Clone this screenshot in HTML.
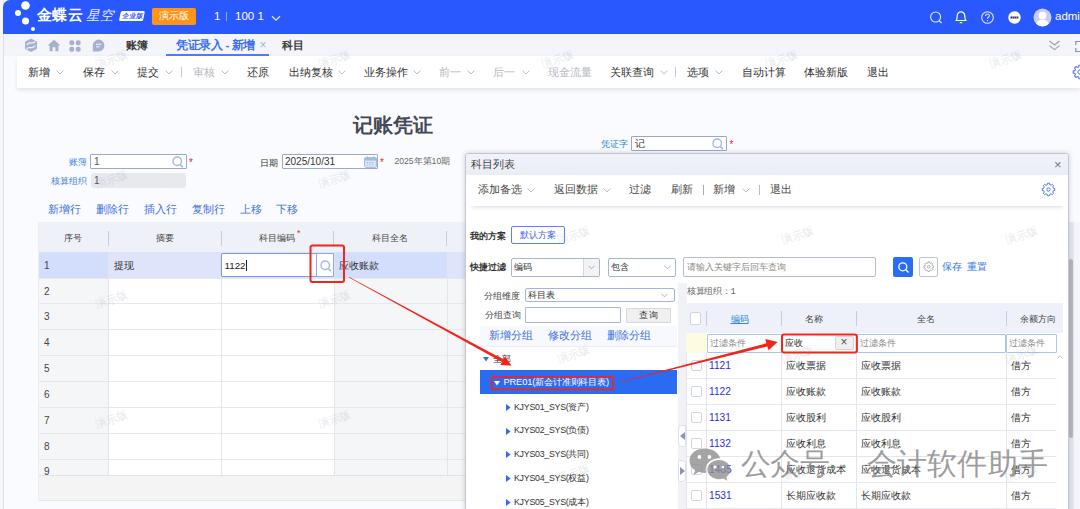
<!DOCTYPE html>
<html><head><meta charset="utf-8">
<style>
*{box-sizing:border-box;margin:0;padding:0}
html,body{width:1080px;height:509px;overflow:hidden;background:#f7f7f8}
body{font-family:"Liberation Sans",sans-serif;position:relative;color:#333;font-size:11px}
.abs{position:absolute}
.t{position:absolute;white-space:nowrap;line-height:1}
#app{position:absolute;left:2.5px;top:0;width:1077.5px;height:509px;background:#fafbfe;border-left:1px solid #dfe0e5}
#hdr{position:absolute;left:3px;top:0;width:1077px;height:34px;background:#2a58ff;border-top-left-radius:7px}
#tabs{position:absolute;left:4px;top:34px;width:1076px;height:22px;background:#f3f5fa}
#tb{position:absolute;left:17px;top:56px;width:1063px;height:32px;background:#fff;box-shadow:0 2px 4px rgba(120,130,160,.18)}
.mi{position:absolute;top:66.2px;font-size:10.6px;line-height:12px;color:#333;white-space:nowrap}
.mi.g{color:#b4b8c0}
.chev{position:absolute;width:8px;height:5px}
.wm{position:absolute;font-size:11px;color:rgba(150,155,170,.27);transform:rotate(-20deg);white-space:nowrap;line-height:1;z-index:50;pointer-events:none}
</style></head><body>
<div id="app"></div>
<div id="hdr"></div>
<div id="tabs"></div>
<div id="tb"></div>

<!-- header logo dots -->
<svg class="abs" style="left:10px;top:0;width:30px;height:34px" viewBox="0 0 30 34"><circle cx="15.5" cy="5.5" r="4.3" fill="#fff"/><circle cx="8" cy="13" r="3" fill="#fff"/><circle cx="15.5" cy="21" r="3.5" fill="#fff"/><circle cx="23" cy="29" r="2" fill="#fff"/></svg>
<div class="t" style="left:37px;top:8px;font-size:14.5px;font-weight:bold;color:#fff;letter-spacing:.4px">金蝶云</div>
<div class="t" style="left:86px;top:9px;font-size:13.5px;font-style:italic;color:#e8ecff">星空</div>
<div class="abs" style="left:120px;top:11px;width:24px;height:9.5px;background:#fff;border-radius:1.5px;transform:skewX(-12deg)"></div>
<div class="t" style="left:122px;top:12.5px;font-size:6.5px;font-style:italic;font-weight:bold;color:#2a58ff">企业版</div>
<div class="abs" style="left:152px;top:7.5px;width:44px;height:17px;background:#ff9419;border-radius:2px"></div>
<div class="t" style="left:159px;top:11px;font-size:10px;color:#fff">演示版</div>
<div class="t" style="left:214px;top:11px;font-size:11.5px;color:#fff">1</div>
<div class="abs" style="left:226px;top:12px;width:1px;height:9px;background:#8fa6ff"></div>
<div class="t" style="left:235px;top:11px;font-size:11.5px;color:#fff">100 1</div>
<svg class="abs" style="left:271px;top:15px;width:10px;height:7px" viewBox="0 0 10 7"><path d="M1 1.2 L5 5.2 L9 1.2" fill="none" stroke="#dfe6ff" stroke-width="1.3"/></svg>
<!-- header right icons -->
<svg class="abs" style="left:928px;top:9px;width:16px;height:16px" viewBox="0 0 16 16"><circle cx="7.6" cy="8" r="5" fill="none" stroke="#e3e9ff" stroke-width="1.1"/><path d="M11.2 11.7 L13.6 14" stroke="#e3e9ff" stroke-width="1.2" fill="none"/></svg>
<svg class="abs" style="left:953px;top:9px;width:16px;height:16px" viewBox="0 0 16 16"><path d="M3 11.5 H13 C11.8 10.5 11.8 9.5 11.8 7 C11.8 4.5 10 2.8 8 2.8 C6 2.8 4.2 4.5 4.2 7 C4.2 9.5 4.2 10.5 3 11.5 Z" fill="none" stroke="#fff" stroke-width="1.2" stroke-linejoin="round"/><path d="M6.8 13.6 H9.2" stroke="#fff" stroke-width="1.3"/></svg>
<svg class="abs" style="left:979px;top:9px;width:17px;height:17px" viewBox="0 0 17 17"><circle cx="8.5" cy="8.5" r="5.8" fill="none" stroke="#e3e9ff" stroke-width="1.1"/><path d="M6.6 7 C6.6 5.6 7.5 5 8.5 5 C9.6 5 10.4 5.7 10.4 6.7 C10.4 8 8.5 8.1 8.5 9.7" fill="none" stroke="#e3e9ff" stroke-width="1.05"/><circle cx="8.5" cy="11.6" r=".7" fill="#e3e9ff"/></svg>
<svg class="abs" style="left:1006px;top:9px;width:17px;height:17px" viewBox="0 0 17 17"><circle cx="8.5" cy="8.5" r="6.2" fill="#fff"/><path d="M4.5 8.5 H12.5" stroke="#2b3350" stroke-width="1.8" stroke-dasharray="1.7 .35"/></svg>
<svg class="abs" style="left:1033px;top:8px;width:19px;height:19px" viewBox="0 0 19 19"><defs><clipPath id="av"><circle cx="9.5" cy="9.5" r="9"/></clipPath></defs><circle cx="9.5" cy="9.5" r="9" fill="#c9cdf3"/><g clip-path="url(#av)"><circle cx="9.5" cy="7.6" r="3.9" fill="#fff"/><ellipse cx="9.5" cy="17.5" rx="6.6" ry="6" fill="#fff"/></g></svg>
<div class="t" style="left:1055px;top:10.5px;font-size:11.5px;color:#fff">admin</div>


<!-- tab icons -->
<svg class="abs" style="left:24px;top:38px;width:14px;height:14.5px" viewBox="0 0 14 14.5"><path d="M7 .5 L13 3.8 V10.7 L7 14 L1 10.7 V3.8 Z" fill="#a6b0cf"/><path d="M2.6 6.6 L5.6 4.9 H9.2 L11.4 3.8 M2.6 10.6 L4.8 9.5 H8.4 L11.4 7.8" stroke="#f3f5fa" stroke-width="1.25" fill="none"/></svg>
<svg class="abs" style="left:47px;top:39px;width:14px;height:13px" viewBox="0 0 14 13"><path d="M7 .8 L13.4 6.4 H11.4 V12.2 H8.4 V8.2 H5.6 V12.2 H2.6 V6.4 H.6 Z" fill="#a6b0cf"/></svg>
<svg class="abs" style="left:69px;top:39.5px;width:12px;height:12px" viewBox="0 0 12 12"><rect x=".3" y=".3" width="5" height="5" rx="2.2" fill="#a6b0cf"/><rect x="6.7" y=".3" width="5" height="5" rx="2.2" fill="#a6b0cf"/><rect x=".3" y="6.7" width="5" height="5" rx="2.2" fill="#a6b0cf"/><rect x="6.7" y="6.7" width="5" height="5" rx="2.2" fill="#a6b0cf"/></svg>
<svg class="abs" style="left:91.5px;top:39px;width:13px;height:13px" viewBox="0 0 13 13"><path d="M6.5 .6 A5.9 5.9 0 1 1 6.5 12.4 H.8 V6.5 A5.9 5.9 0 0 1 6.5 .6 Z" fill="#a6b0cf"/><path d="M4 5.2 H9.4 M4 7.8 H7.6" stroke="#f3f5fa" stroke-width="1.1"/></svg>
<div class="t" style="left:126px;top:40px;font-size:11.2px;font-weight:bold;color:#3a3a3a">账簿</div>
<div class="t" style="left:176px;top:39.5px;font-size:11.5px;font-weight:bold;color:#3a6df0;letter-spacing:-.35px">凭证录入 - 新增</div>
<div class="t" style="left:259.5px;top:39px;font-size:12px;color:#b0b4bd">×</div>
<div class="abs" style="left:165.5px;top:54px;width:103.5px;height:1.5px;background:#4b7bf5"></div>
<div class="t" style="left:282px;top:40px;font-size:11.2px;font-weight:bold;color:#3a3a3a">科目</div>
<svg class="abs" style="left:1048px;top:39px;width:13px;height:13px" viewBox="0 0 13 13"><path d="M1.5 2 L6.5 6 L11.5 2 M1.5 6.6 L6.5 10.6 L11.5 6.6" fill="none" stroke="#9a9fb0" stroke-width="1.15"/></svg>
<svg class="abs" style="left:1074px;top:40px;width:8px;height:13px" viewBox="0 0 8 13"><path d="M6 1.5 H1.8 V5 M1.8 8 V11.5 H6" fill="none" stroke="#8a90a3" stroke-width="1.2"/></svg>

<div class="mi" style="left:27.5px">新增</div><svg class="chev" style="left:56px;top:70px" viewBox="0 0 8 5"><path d="M.6 .6 L4 4 L7.4 .6" fill="none" stroke="#b9bdc8" stroke-width="1"/></svg><div class="mi" style="left:82.5px">保存</div><svg class="chev" style="left:110.5px;top:70px" viewBox="0 0 8 5"><path d="M.6 .6 L4 4 L7.4 .6" fill="none" stroke="#b9bdc8" stroke-width="1"/></svg><div class="mi" style="left:137px">提交</div><svg class="chev" style="left:165px;top:70px" viewBox="0 0 8 5"><path d="M.6 .6 L4 4 L7.4 .6" fill="none" stroke="#b9bdc8" stroke-width="1"/></svg><div class="mi g" style="left:192.5px">审核</div><svg class="chev" style="left:220.5px;top:70px" viewBox="0 0 8 5"><path d="M.6 .6 L4 4 L7.4 .6" fill="none" stroke="#b9bdc8" stroke-width="1"/></svg><div class="mi" style="left:247px">还原</div><div class="mi" style="left:289px">出纳复核</div><svg class="chev" style="left:338px;top:70px" viewBox="0 0 8 5"><path d="M.6 .6 L4 4 L7.4 .6" fill="none" stroke="#b9bdc8" stroke-width="1"/></svg><div class="mi" style="left:364px">业务操作</div><svg class="chev" style="left:413px;top:70px" viewBox="0 0 8 5"><path d="M.6 .6 L4 4 L7.4 .6" fill="none" stroke="#b9bdc8" stroke-width="1"/></svg><div class="mi g" style="left:439px">前一</div><svg class="chev" style="left:467px;top:70px" viewBox="0 0 8 5"><path d="M.6 .6 L4 4 L7.4 .6" fill="none" stroke="#b9bdc8" stroke-width="1"/></svg><div class="mi g" style="left:493px">后一</div><svg class="chev" style="left:521.5px;top:70px" viewBox="0 0 8 5"><path d="M.6 .6 L4 4 L7.4 .6" fill="none" stroke="#b9bdc8" stroke-width="1"/></svg><div class="mi g" style="left:547.5px">现金流量</div><div class="mi" style="left:610px">关联查询</div><svg class="chev" style="left:659.5px;top:70px" viewBox="0 0 8 5"><path d="M.6 .6 L4 4 L7.4 .6" fill="none" stroke="#b9bdc8" stroke-width="1"/></svg><div class="mi" style="left:686.5px">选项</div><svg class="chev" style="left:715px;top:70px" viewBox="0 0 8 5"><path d="M.6 .6 L4 4 L7.4 .6" fill="none" stroke="#b9bdc8" stroke-width="1"/></svg><div class="mi" style="left:741.5px">自动计算</div><div class="mi" style="left:804px">体验新版</div><div class="mi" style="left:866.5px">退出</div><div class="abs" style="left:181px;top:67px;width:1px;height:10px;background:#c5c8d0"></div><div class="abs" style="left:675px;top:67px;width:1px;height:10px;background:#c5c8d0"></div><svg class="abs" style="left:1072px;top:64px;width:16px;height:16px" viewBox="0 0 16 16"><path d="M13.15 6.76 L14.71 6.88 L14.71 9.12 L13.15 9.24 L12.52 10.77 L13.53 11.95 L11.95 13.53 L10.77 12.52 L9.24 13.15 L9.12 14.71 L6.88 14.71 L6.76 13.15 L5.23 12.52 L4.05 13.53 L2.47 11.95 L3.48 10.77 L2.85 9.24 L1.29 9.12 L1.29 6.88 L2.85 6.76 L3.48 5.23 L2.47 4.05 L4.05 2.47 L5.23 3.48 L6.76 2.85 L6.88 1.29 L9.12 1.29 L9.24 2.85 L10.77 3.48 L11.95 2.47 L13.53 4.05 L12.52 5.23 Z" fill="none" stroke="#4f7cf3" stroke-width="1.1"/><circle cx="8" cy="8" r="2.2" fill="none" stroke="#4f7cf3" stroke-width="1"/></svg>

<div class="t" style="left:352.5px;top:115px;font-size:20px;font-weight:bold;color:#454955">记账凭证</div>
<div class="t" style="left:68.5px;top:157.5px;font-size:9px;color:#3f7fe6">账簿</div>
<div class="abs" style="left:90px;top:154px;width:97px;height:15px;background:#fff;border:1px solid #9ba8c8;border-radius:1px"></div>
<div class="t" style="left:94px;top:157px;font-size:10px;color:#555">1</div>
<svg class="abs" style="left:171.5px;top:156px;width:12px;height:12px" viewBox="0 0 11 11"><circle cx="4.8" cy="4.8" r="3.9" fill="none" stroke="#a3b6e0" stroke-width="1.25"/><path d="M7.6 7.7 L10 10.2" stroke="#a3b6e0" stroke-width="1.35"/></svg>
<div class="t" style="left:189px;top:158px;font-size:10px;color:#ee2222">*</div>
<div class="t" style="left:50.5px;top:177px;font-size:9px;color:#3f7fe6">核算组织</div>
<div class="abs" style="left:91px;top:173px;width:95px;height:14.5px;background:#e7e9ee;border-radius:3px"></div>
<div class="t" style="left:94px;top:176px;font-size:10px;color:#555">1</div>
<div class="t" style="left:260px;top:158.5px;font-size:9px;color:#333">日期</div>
<div class="abs" style="left:281.5px;top:154px;width:96.5px;height:15px;background:#fff;border:1px solid #9ba8c8;border-radius:1px"></div>
<div class="t" style="left:285px;top:157px;font-size:10px;color:#333">2025/10/31</div>
<svg class="abs" style="left:363.5px;top:155.5px;width:13px;height:12px" viewBox="0 0 13 12"><rect x=".6" y="1.6" width="11.8" height="9.8" rx="1.2" fill="#dfe7f8" stroke="#a4b9e6" stroke-width="1"/><rect x=".6" y="1.6" width="11.8" height="3" fill="#a4b9e6"/><path d="M3.4 .2 V2.6 M9.6 .2 V2.6" stroke="#a4b9e6" stroke-width="1.2"/><path d="M2.6 6.6 H10.4 M2.6 9 H10.4" stroke="#a4b9e6" stroke-width="1.2" stroke-dasharray="1.6 .9"/></svg>
<div class="t" style="left:380px;top:158px;font-size:10px;color:#ee2222">*</div>
<div class="t" style="left:394.5px;top:156.5px;font-size:8.6px;color:#666">2025年第10期</div>
<div class="t" style="left:601px;top:139.5px;font-size:8.8px;color:#1f80e0">凭证字</div>
<div class="abs" style="left:631px;top:135.5px;width:96px;height:15px;background:#fff;border:1px solid #9ba8c8;border-radius:1px"></div>
<div class="t" style="left:634.5px;top:138.5px;font-size:9.5px;color:#333">记</div>
<svg class="abs" style="left:712px;top:137.5px;width:12px;height:12px" viewBox="0 0 11 11"><circle cx="4.8" cy="4.8" r="3.9" fill="none" stroke="#a3b6e0" stroke-width="1.25"/><path d="M7.6 7.7 L10 10.2" stroke="#a3b6e0" stroke-width="1.35"/></svg>
<div class="t" style="left:729.5px;top:139.5px;font-size:10px;color:#ee2222">*</div>
<!-- row ops -->
<div class="abs" style="left:38px;top:196px;width:1042px;height:26px;background:#fafbfe"></div>
<div class="t" style="left:48px;top:204px;font-size:11.4px;color:#3f70e0">新增行</div><div class="t" style="left:96px;top:204px;font-size:11.4px;color:#3f70e0">删除行</div><div class="t" style="left:144px;top:204px;font-size:11.4px;color:#3f70e0">插入行</div><div class="t" style="left:191.5px;top:204px;font-size:11.4px;color:#3f70e0">复制行</div><div class="t" style="left:239.5px;top:204px;font-size:11.4px;color:#3f70e0">上移</div><div class="t" style="left:276px;top:204px;font-size:11.4px;color:#3f70e0">下移</div>
<div class="abs" style="left:38px;top:222px;width:1042px;height:30px;background:#eef1f8"></div><div class="abs" style="left:38px;top:252px;width:1042px;height:223px;background:#fff"></div><div class="abs" style="left:38px;top:252px;width:70px;height:223px;background:#f5f6f8"></div><div class="abs" style="left:333.5px;top:252px;width:113px;height:223px;background:#f5f6f8"></div><div class="abs" style="left:446.5px;top:252px;width:20px;height:223px;background:#f5f6f8"></div><div class="abs" style="left:38px;top:252px;width:1042px;height:25.6px;background:#dfe4fb"></div><div class="abs" style="left:38px;top:252px;width:70px;height:25.6px;background:#d2defb"></div><div class="abs" style="left:333.5px;top:252px;width:113px;height:25.6px;background:#d2defb"></div><div class="abs" style="left:38px;top:277.6px;width:1042px;height:1px;background:#e7e8ec"></div><div class="abs" style="left:38px;top:303.4px;width:1042px;height:1px;background:#e7e8ec"></div><div class="abs" style="left:38px;top:329.2px;width:1042px;height:1px;background:#e7e8ec"></div><div class="abs" style="left:38px;top:355.1px;width:1042px;height:1px;background:#e7e8ec"></div><div class="abs" style="left:38px;top:380.9px;width:1042px;height:1px;background:#e7e8ec"></div><div class="abs" style="left:38px;top:406.8px;width:1042px;height:1px;background:#e7e8ec"></div><div class="abs" style="left:38px;top:432.7px;width:1042px;height:1px;background:#e7e8ec"></div><div class="abs" style="left:38px;top:458.5px;width:1042px;height:1px;background:#e7e8ec"></div><div class="abs" style="left:108px;top:252px;width:1px;height:223px;background:#e4e5ea"></div><div class="abs" style="left:107.5px;top:231px;width:1px;height:15px;background:#c8ccd6"></div><div class="abs" style="left:221px;top:252px;width:1px;height:223px;background:#e4e5ea"></div><div class="abs" style="left:220.5px;top:231px;width:1px;height:15px;background:#c8ccd6"></div><div class="abs" style="left:333.5px;top:252px;width:1px;height:223px;background:#e4e5ea"></div><div class="abs" style="left:333.0px;top:231px;width:1px;height:15px;background:#c8ccd6"></div><div class="abs" style="left:446.5px;top:252px;width:1px;height:223px;background:#e4e5ea"></div><div class="abs" style="left:446.0px;top:231px;width:1px;height:15px;background:#c8ccd6"></div><div class="t" style="left:33px;width:80px;text-align:center;top:234.3px;font-size:9px;color:#444">序号</div><div class="t" style="left:124.5px;width:80px;text-align:center;top:234.3px;font-size:9px;color:#444">摘要</div><div class="t" style="left:237px;width:80px;text-align:center;top:234.3px;font-size:9px;color:#444">科目编码</div><div class="t" style="left:350px;width:80px;text-align:center;top:234.3px;font-size:9px;color:#444">科目全名</div><div class="t" style="left:297px;top:229px;font-size:9px;color:#ee2222">*</div><div class="t" style="left:44px;top:260.6px;font-size:10px;color:#444">1</div><div class="t" style="left:44px;top:286.5px;font-size:10px;color:#444">2</div><div class="t" style="left:44px;top:312.3px;font-size:10px;color:#444">3</div><div class="t" style="left:44px;top:338.2px;font-size:10px;color:#444">4</div><div class="t" style="left:44px;top:364.0px;font-size:10px;color:#444">5</div><div class="t" style="left:44px;top:389.9px;font-size:10px;color:#444">6</div><div class="t" style="left:44px;top:415.7px;font-size:10px;color:#444">7</div><div class="t" style="left:44px;top:441.6px;font-size:10px;color:#444">8</div><div class="t" style="left:44px;top:467.4px;font-size:10px;color:#444">9</div><div class="t" style="left:113.5px;top:260.5px;font-size:9.8px;color:#333">提现</div><div class="abs" style="left:221px;top:252.5px;width:95.5px;height:24.8px;background:#fff;border:1px solid #7d96ee;border-radius:1px"></div><div class="t" style="left:224.5px;top:260.5px;font-size:9.8px;color:#222">1122</div><div class="abs" style="left:245.5px;top:259.5px;width:1px;height:11px;background:#222"></div><div class="abs" style="left:316px;top:252.5px;width:18px;height:24.8px;background:#fff;border:1px solid #93a8ec"></div><svg class="abs" style="left:319.5px;top:259.5px;width:12px;height:12px" viewBox="0 0 11 11"><circle cx="4.8" cy="4.8" r="3.9" fill="none" stroke="#a3b6e0" stroke-width="1.25"/><path d="M7.6 7.7 L10 10.2" stroke="#a3b6e0" stroke-width="1.35"/></svg><div class="t" style="left:339px;top:260.5px;font-size:9.8px;color:#333">应收账款</div><div class="abs" style="left:38px;top:475px;width:1042px;height:26px;background:#f4f4f4;border-top:1px solid #e2e3e6;border-bottom:1px solid #e8e8ea"></div><div class="abs" style="left:38px;top:222px;width:1px;height:279px;background:#eceef2"></div>

<!-- page scrollbar behind popup -->
<div class="abs" style="left:1069px;top:222px;width:11px;height:287px;background:#f4f5fa"></div><div class="abs" style="left:1069px;top:222px;width:5px;height:287px;background:#e6e8f0"></div>
<div class="abs" style="left:1069.3px;top:259px;width:4.2px;height:178.5px;background:#b7b8bb;border-radius:2px"></div>
<div id="pop" class="abs" style="left:465px;top:153px;width:604px;height:360px;background:#fff;border:1px solid #c3c7d0;border-radius:3px 3px 0 0;box-shadow:0 0 5px rgba(60,70,100,.25)"></div>
<div class="abs" style="left:466px;top:154px;width:602px;height:20.5px;background:linear-gradient(#f1f3fa,#e9edf6);border-radius:2px 2px 0 0"></div>
<div class="t" style="left:471px;top:159px;font-size:10.8px;color:#444">科目列表</div>
<div class="t" style="left:1054px;top:158px;font-size:13px;color:#777">×</div>
<div class="abs" style="left:468.5px;top:174.5px;width:597px;height:31.5px;background:#fff;box-shadow:0 4px 4px -3px rgba(120,130,160,.3)"></div>
<div class="t" style="left:478px;top:184.3px;font-size:10.5px;color:#484848">添加备选</div><svg class="abs" style="left:527.0px;top:188px;width:8px;height:5px" viewBox="0 0 8 5"><path d="M.6 .6 L4 4 L7.4 .6" fill="none" stroke="#b9bdc8" stroke-width="1"/></svg><div class="t" style="left:553.5px;top:184.3px;font-size:10.5px;color:#484848">返回数据</div><svg class="abs" style="left:602.5px;top:188px;width:8px;height:5px" viewBox="0 0 8 5"><path d="M.6 .6 L4 4 L7.4 .6" fill="none" stroke="#b9bdc8" stroke-width="1"/></svg><div class="t" style="left:628.5px;top:184.3px;font-size:10.5px;color:#484848">过滤</div><div class="t" style="left:670.5px;top:184.3px;font-size:10.5px;color:#484848">刷新</div><div class="t" style="left:713px;top:184.3px;font-size:10.5px;color:#484848">新增</div><svg class="abs" style="left:742.0px;top:188px;width:8px;height:5px" viewBox="0 0 8 5"><path d="M.6 .6 L4 4 L7.4 .6" fill="none" stroke="#b9bdc8" stroke-width="1"/></svg><div class="t" style="left:770px;top:184.3px;font-size:10.5px;color:#484848">退出</div><div class="abs" style="left:702.5px;top:185px;width:1px;height:10px;background:#aaa"></div><div class="abs" style="left:758.5px;top:185px;width:1px;height:10px;background:#bbb"></div><svg class="abs" style="left:1040.5px;top:182px;width:15px;height:15px" viewBox="0 0 15 15"><path d="M12.36 6.33 L13.81 6.45 L13.81 8.55 L12.36 8.67 L11.76 10.11 L12.71 11.22 L11.22 12.71 L10.11 11.76 L8.67 12.36 L8.55 13.81 L6.45 13.81 L6.33 12.36 L4.89 11.76 L3.78 12.71 L2.29 11.22 L3.24 10.11 L2.64 8.67 L1.19 8.55 L1.19 6.45 L2.64 6.33 L3.24 4.89 L2.29 3.78 L3.78 2.29 L4.89 3.24 L6.33 2.64 L6.45 1.19 L8.55 1.19 L8.67 2.64 L10.11 3.24 L11.22 2.29 L12.71 3.78 L11.76 4.89 Z" fill="none" stroke="#4f7cf3" stroke-width="1"/><circle cx="7.5" cy="7.5" r="1.7" fill="none" stroke="#4f7cf3" stroke-width="1"/></svg><div class="t" style="left:469.5px;top:231.5px;font-size:9px;font-weight:bold;color:#333">我的方案</div><div class="abs" style="left:511px;top:225.5px;width:53.5px;height:18.5px;border:1px solid #5b80f5;border-radius:2px;background:#fff"></div><div class="t" style="left:520px;top:230.5px;font-size:9px;color:#3a62f0">默认方案</div><div class="t" style="left:469.5px;top:262.5px;font-size:9px;font-weight:bold;color:#333">快捷过滤</div><div class="abs" style="left:510.5px;top:257.5px;width:89px;height:19px;border:1px solid #a6b5d8;border-radius:2px;background:#fff"></div><div class="abs" style="left:582.5px;top:258.5px;width:16px;height:17px;background:#f3f3f4;border-left:1px solid #d5d8e0"></div><div class="t" style="left:514px;top:262.8px;font-size:9px;color:#333">编码</div><svg class="abs" style="left:587.5px;top:265px;width:7px;height:5px" viewBox="0 0 8 5"><path d="M.6 .6 L4 4 L7.4 .6" fill="none" stroke="#a0a4ae" stroke-width="1"/></svg><div class="abs" style="left:607.5px;top:257.5px;width:68.5px;height:19px;border:1px solid #a6b5d8;border-radius:2px;background:#fff"></div><div class="t" style="left:611px;top:262.8px;font-size:9px;color:#333">包含</div><svg class="abs" style="left:663.5px;top:265px;width:7px;height:5px" viewBox="0 0 8 5"><path d="M.6 .6 L4 4 L7.4 .6" fill="none" stroke="#a0a4ae" stroke-width="1"/></svg><div class="abs" style="left:683px;top:257px;width:192.5px;height:19.5px;border:1px solid #b4bccd;border-radius:2px;background:#fff"></div><div class="t" style="left:686.5px;top:263px;font-size:8.6px;color:#888">请输入关键字后回车查询</div><div class="abs" style="left:893px;top:256.5px;width:20px;height:20.5px;background:#2a6df4;border-radius:2px"></div><svg class="abs" style="left:897px;top:260.5px;width:13px;height:13px" viewBox="0 0 13 13"><circle cx="5.8" cy="5.8" r="4" fill="none" stroke="#fff" stroke-width="1.3"/><path d="M8.8 8.8 L11.6 11.6" stroke="#fff" stroke-width="1.4"/></svg><div class="abs" style="left:918.5px;top:257px;width:19.5px;height:19.5px;border:1.3px solid #bcc3d6;border-radius:2px;background:#fff"></div><svg class="abs" style="left:922.5px;top:261px;width:11.5px;height:11.5px" viewBox="0 0 15 15"><path d="M12.36 6.33 L13.81 6.45 L13.81 8.55 L12.36 8.67 L11.76 10.11 L12.71 11.22 L11.22 12.71 L10.11 11.76 L8.67 12.36 L8.55 13.81 L6.45 13.81 L6.33 12.36 L4.89 11.76 L3.78 12.71 L2.29 11.22 L3.24 10.11 L2.64 8.67 L1.19 8.55 L1.19 6.45 L2.64 6.33 L3.24 4.89 L2.29 3.78 L3.78 2.29 L4.89 3.24 L6.33 2.64 L6.45 1.19 L8.55 1.19 L8.67 2.64 L10.11 3.24 L11.22 2.29 L12.71 3.78 L11.76 4.89 Z" fill="none" stroke="#a5a9b5" stroke-width="1.2"/><circle cx="7.5" cy="7.5" r="1.8" fill="none" stroke="#a5a9b5" stroke-width="1.2"/></svg><div class="t" style="left:942px;top:262px;font-size:10px;color:#3378e6">保存</div><div class="t" style="left:966.5px;top:262px;font-size:10px;color:#3378e6">重置</div><div class="abs" style="left:468.5px;top:283px;width:209px;height:226px;background:#fff"></div><div class="t" style="left:484px;top:291.5px;font-size:9px;color:#444">分组维度</div><div class="abs" style="left:524.5px;top:287.5px;width:150px;height:14.5px;border:1px solid #a6b5d8;border-radius:2px;background:#fff"></div><div class="t" style="left:527.5px;top:290.5px;font-size:9px;color:#333">科目表</div><svg class="abs" style="left:661.0px;top:292.5px;width:7px;height:5px" viewBox="0 0 8 5"><path d="M.6 .6 L4 4 L7.4 .6" fill="none" stroke="#a0a4ae" stroke-width="1"/></svg><div class="t" style="left:485px;top:310.5px;font-size:9px;color:#444">分组查询</div><div class="abs" style="left:525px;top:307px;width:95.5px;height:15.5px;border:1px solid #a6b5d8;border-radius:1px;background:#fff"></div><div class="abs" style="left:626px;top:307.5px;width:44.5px;height:15px;border:1px solid #d6d8dd;border-radius:1px;background:#f0f0f1"></div><div class="t" style="left:639px;top:310.5px;font-size:9.3px;color:#333;letter-spacing:.5px">查询</div><div class="abs" style="left:480px;top:326px;width:197px;height:20px;background:#f8f9fe"></div><div class="t" style="left:489px;top:329.5px;font-size:11.3px;color:#3f70e0">新增分组</div><div class="t" style="left:548px;top:329.5px;font-size:11.3px;color:#3f70e0">修改分组</div><div class="t" style="left:607px;top:329.5px;font-size:11.3px;color:#3f70e0">删除分组</div><div class="abs" style="left:480px;top:346px;width:197px;height:163px;background:#fff;border-top:1px solid #eceef4"></div><svg class="abs" style="left:483px;top:356.5px;width:6px;height:5px" viewBox="0 0 6 5"><path d="M0 0 H6 L3 4.6 Z" fill="#2f6cf0"/></svg><div class="t" style="left:493px;top:354.5px;font-size:9px;color:#333">全部</div><div class="abs" style="left:480px;top:370.2px;width:197px;height:24px;background:#2b6bf3"></div><svg class="abs" style="left:494px;top:380.5px;width:6px;height:5px" viewBox="0 0 6 5"><path d="M0 0 H6 L3 4.6 Z" fill="#fff"/></svg><div class="t" style="left:503.5px;top:378px;font-size:9.3px;letter-spacing:-.15px;color:#fff">PRE01(新会计准则科目表)</div><svg class="abs" style="left:505.5px;top:403.8px;width:5px;height:7px" viewBox="0 0 5 7"><path d="M0 0 L4.6 3.5 L0 7 Z" fill="#2f6cf0"/></svg><div class="t" style="left:514px;top:402.5px;font-size:8.8px;letter-spacing:-.25px;color:#333">KJYS01_SYS(资产)</div><svg class="abs" style="left:505.5px;top:427.6px;width:5px;height:7px" viewBox="0 0 5 7"><path d="M0 0 L4.6 3.5 L0 7 Z" fill="#2f6cf0"/></svg><div class="t" style="left:514px;top:426.3px;font-size:8.8px;letter-spacing:-.25px;color:#333">KJYS02_SYS(负债)</div><svg class="abs" style="left:505.5px;top:451.4px;width:5px;height:7px" viewBox="0 0 5 7"><path d="M0 0 L4.6 3.5 L0 7 Z" fill="#2f6cf0"/></svg><div class="t" style="left:514px;top:450.1px;font-size:8.8px;letter-spacing:-.25px;color:#333">KJYS03_SYS(共同)</div><svg class="abs" style="left:505.5px;top:475.2px;width:5px;height:7px" viewBox="0 0 5 7"><path d="M0 0 L4.6 3.5 L0 7 Z" fill="#2f6cf0"/></svg><div class="t" style="left:514px;top:473.9px;font-size:8.8px;letter-spacing:-.25px;color:#333">KJYS04_SYS(权益)</div><svg class="abs" style="left:505.5px;top:499.0px;width:5px;height:7px" viewBox="0 0 5 7"><path d="M0 0 L4.6 3.5 L0 7 Z" fill="#2f6cf0"/></svg><div class="t" style="left:514px;top:497.7px;font-size:8.8px;letter-spacing:-.25px;color:#333">KJYS05_SYS(成本)</div><div class="abs" style="left:677.5px;top:283px;width:9px;height:226px;background:#f1f2f5"></div><div class="abs" style="left:678px;top:425px;width:8px;height:22px;background:#fff;border:1px solid #dfe1e8;border-radius:4px 0 0 4px"></div><svg class="abs" style="left:680px;top:432px;width:5px;height:8px" viewBox="0 0 5 8"><path d="M5 0 L0 4 L5 8 Z" fill="#8a93b5"/></svg><div class="abs" style="left:678px;top:460px;width:8px;height:22px;background:#fff;border:1px solid #dfe1e8;border-radius:0 4px 4px 0"></div><svg class="abs" style="left:679.5px;top:467px;width:5px;height:8px" viewBox="0 0 5 8"><path d="M0 0 L5 4 L0 8 Z" fill="#8a93b5"/></svg><div class="t" style="left:687px;top:287.5px;font-size:8.6px;color:#666;font-family:'Liberation Mono',monospace;letter-spacing:-.3px">核算组织：1</div><div class="abs" style="left:686px;top:303px;width:376.5px;height:29.5px;background:#eef1f9"></div><div class="abs" style="left:690px;top:312px;width:11px;height:12.5px;background:#fff;border:1px solid #cfd4e2;border-radius:2px"></div><div class="abs" style="left:706px;top:311px;width:1px;height:15px;background:#c8ccd6"></div><div class="abs" style="left:781px;top:311px;width:1px;height:15px;background:#c8ccd6"></div><div class="abs" style="left:856px;top:311px;width:1px;height:15px;background:#c8ccd6"></div><div class="abs" style="left:1005.5px;top:311px;width:1px;height:15px;background:#c8ccd6"></div><div class="t" style="left:730.5px;top:315px;font-size:9px;color:#2d86e8;text-decoration:underline">编码</div><div class="t" style="left:805px;top:315px;font-size:9px;color:#444">名称</div><div class="t" style="left:917px;top:315px;font-size:9px;color:#444">全名</div><div class="t" style="left:1020px;top:315px;font-size:9px;color:#444">余额方向</div><div class="abs" style="left:686px;top:332.5px;width:20px;height:20px;background:#fdfbe2"></div><div class="abs" style="left:707px;top:334px;width:74.5px;height:18.5px;background:#fff;border:1px solid #a9c6ea;border-radius:1px"></div><div class="t" style="left:710px;top:339px;font-size:8.8px;color:#888">过滤条件</div><div class="abs" style="left:856.5px;top:334px;width:149px;height:18.5px;background:#fff;border:1px solid #a9c6ea;border-radius:1px"></div><div class="t" style="left:859.5px;top:339px;font-size:8.8px;color:#888">过滤条件</div><div class="abs" style="left:1006px;top:334px;width:51px;height:18.5px;background:#fff;border:1px solid #a9c6ea;border-radius:1px"></div><div class="t" style="left:1009px;top:339px;font-size:8.8px;color:#888">过滤条件</div><div class="abs" style="left:782px;top:334px;width:74.5px;height:18.5px;background:#fff"></div><div class="t" style="left:785px;top:339px;font-size:9px;color:#222">应收</div><div class="abs" style="left:834.5px;top:336px;width:19.5px;height:13.5px;background:#efeff0;border:1px solid #d2d4da;border-radius:2px"></div><div class="t" style="left:840.5px;top:336px;font-size:12px;color:#555">×</div><div class="abs" style="left:686px;top:378.0px;width:370px;height:1px;background:#e6e7eb"></div><div class="abs" style="left:690.5px;top:360.0px;width:11.5px;height:10.5px;background:#fff;border:1px solid #d0d5e3;border-radius:2px"></div><div class="t" style="left:709px;top:360.8px;font-size:10.2px;color:#2a2af2">1121</div><div class="t" style="left:786px;top:361.2px;font-size:9.6px;color:#333">应收票据</div><div class="t" style="left:861px;top:361.2px;font-size:9.6px;color:#333">应收票据</div><div class="t" style="left:1010.5px;top:361.2px;font-size:9.6px;color:#333">借方</div><div class="abs" style="left:686px;top:404.0px;width:370px;height:1px;background:#e6e7eb"></div><div class="abs" style="left:690.5px;top:386.0px;width:11.5px;height:10.5px;background:#fff;border:1px solid #d0d5e3;border-radius:2px"></div><div class="t" style="left:709px;top:386.8px;font-size:10.2px;color:#2a2af2">1122</div><div class="t" style="left:786px;top:387.2px;font-size:9.6px;color:#333">应收账款</div><div class="t" style="left:861px;top:387.2px;font-size:9.6px;color:#333">应收账款</div><div class="t" style="left:1010.5px;top:387.2px;font-size:9.6px;color:#333">借方</div><div class="abs" style="left:686px;top:430.0px;width:370px;height:1px;background:#e6e7eb"></div><div class="abs" style="left:690.5px;top:412.0px;width:11.5px;height:10.5px;background:#fff;border:1px solid #d0d5e3;border-radius:2px"></div><div class="t" style="left:709px;top:412.8px;font-size:10.2px;color:#2a2af2">1131</div><div class="t" style="left:786px;top:413.2px;font-size:9.6px;color:#333">应收股利</div><div class="t" style="left:861px;top:413.2px;font-size:9.6px;color:#333">应收股利</div><div class="t" style="left:1010.5px;top:413.2px;font-size:9.6px;color:#333">借方</div><div class="abs" style="left:686px;top:456.0px;width:370px;height:1px;background:#e6e7eb"></div><div class="abs" style="left:690.5px;top:438.0px;width:11.5px;height:10.5px;background:#fff;border:1px solid #d0d5e3;border-radius:2px"></div><div class="t" style="left:709px;top:438.8px;font-size:10.2px;color:#2a2af2">1132</div><div class="t" style="left:786px;top:439.2px;font-size:9.6px;color:#333">应收利息</div><div class="t" style="left:861px;top:439.2px;font-size:9.6px;color:#333">应收利息</div><div class="t" style="left:1010.5px;top:439.2px;font-size:9.6px;color:#333">借方</div><div class="abs" style="left:686px;top:482.0px;width:370px;height:1px;background:#e6e7eb"></div><div class="abs" style="left:690.5px;top:464.0px;width:11.5px;height:10.5px;background:#fff;border:1px solid #d0d5e3;border-radius:2px"></div><div class="t" style="left:709px;top:464.8px;font-size:10.2px;color:#2a2af2">1485</div><div class="t" style="left:786px;top:465.2px;font-size:9.6px;color:#333">应收退货成本</div><div class="t" style="left:861px;top:465.2px;font-size:9.6px;color:#333">应收退货成本</div><div class="t" style="left:1010.5px;top:465.2px;font-size:9.6px;color:#333">借方</div><div class="abs" style="left:686px;top:508.0px;width:370px;height:1px;background:#e6e7eb"></div><div class="abs" style="left:690.5px;top:490.0px;width:11.5px;height:10.5px;background:#fff;border:1px solid #d0d5e3;border-radius:2px"></div><div class="t" style="left:709px;top:490.8px;font-size:10.2px;color:#2a2af2">1531</div><div class="t" style="left:786px;top:491.2px;font-size:9.6px;color:#333">长期应收款</div><div class="t" style="left:861px;top:491.2px;font-size:9.6px;color:#333">长期应收款</div><div class="t" style="left:1010.5px;top:491.2px;font-size:9.6px;color:#333">借方</div><div class="abs" style="left:706px;top:352.5px;width:1px;height:157px;background:#e4e5ea"></div><div class="abs" style="left:781px;top:352.5px;width:1px;height:157px;background:#e4e5ea"></div><div class="abs" style="left:856px;top:352.5px;width:1px;height:157px;background:#e4e5ea"></div><div class="abs" style="left:1005.5px;top:352.5px;width:1px;height:157px;background:#e4e5ea"></div><div class="abs" style="left:686px;top:352.5px;width:1px;height:157px;background:#e4e5ea"></div><svg class="abs" style="left:1056.5px;top:355px;width:6px;height:4px" viewBox="0 0 6 4"><path d="M.5 3.5 L3 .8 L5.5 3.5" fill="none" stroke="#b5b8c2" stroke-width=".9"/></svg>

<svg class="abs" style="left:0;top:0;width:1080px;height:509px;z-index:60;pointer-events:none" viewBox="0 0 1080 509">
<rect x="310.5" y="245.5" width="33.5" height="36.5" rx="2" fill="none" stroke="#f2241c" stroke-width="2"/>
<rect x="491.8" y="376.8" width="121.5" height="12.5" rx="2" fill="none" stroke="#f2241c" stroke-width="1.8"/>
<rect x="782" y="334.5" width="74.8" height="18" rx="2" fill="none" stroke="#f2241c" stroke-width="2"/>
<!-- arrow 1 tapered -->
<path d="M348.86 277.56 L502.0 361.9 L500.4 364.9 L511.6 365.6 L505 356.5 L503.4 359.5 L349.14 277.04 Z" fill="#f2241c"/>
<!-- arrow 2 tapered -->
<path d="M620.3 382.3 L767.2 346.5 L768.6 350.2 L777.6 341.9 L765.4 339 L766.3 343.3 L620.2 381.7 Z" fill="#f2241c"/>
</svg>
<div class="wm" style="left:95px;top:54px">演示版</div><div class="wm" style="left:318px;top:54px">演示版</div><div class="wm" style="left:541px;top:54px">演示版</div><div class="wm" style="left:765px;top:54px">演示版</div><div class="wm" style="left:989px;top:54px">演示版</div><div class="wm" style="left:95px;top:174px">演示版</div><div class="wm" style="left:318px;top:174px">演示版</div><div class="wm" style="left:95px;top:294px">演示版</div><div class="wm" style="left:318px;top:294px">演示版</div><div class="wm" style="left:95px;top:414px">演示版</div><div class="wm" style="left:318px;top:414px">演示版</div><div class="wm" style="left:557px;top:230px">演示版</div><div class="wm" style="left:781px;top:230px">演示版</div><div class="wm" style="left:1005px;top:230px">演示版</div><div class="wm" style="left:557px;top:349px">演示版</div><div class="wm" style="left:781px;top:349px">演示版</div><div class="wm" style="left:1005px;top:349px">演示版</div><div class="wm" style="left:557px;top:468px">演示版</div><div class="wm" style="left:781px;top:468px">演示版</div><div class="wm" style="left:1005px;top:468px">演示版</div>
<svg class="abs" style="left:688px;top:447px;width:44px;height:36px;z-index:70;opacity:.8" viewBox="0 0 44 36">
<path d="M16.5 1.5 C8 1.5 1.5 7 1.5 13.8 C1.5 17.7 3.7 21.1 7.1 23.3 L5.6 27.8 L10.9 25.1 C12.6 25.6 14.4 25.9 16.5 25.9 C17.1 25.9 17.7 25.9 18.3 25.8 C17.9 24.7 17.7 23.6 17.7 22.4 C17.7 16.2 23.6 11.2 30.9 11.2 C31.3 11.2 31.7 11.2 32.1 11.3 C30.8 5.7 24.3 1.5 16.5 1.5 Z" fill="#8f8f8f"/>
<path d="M42.5 22.6 C42.5 17.3 37.3 13 30.9 13 C24.5 13 19.4 17.3 19.4 22.6 C19.4 27.9 24.5 32.2 30.9 32.2 C32.4 32.2 33.9 31.9 35.2 31.5 L39.3 33.8 L38.2 30 C40.8 28.2 42.5 25.6 42.5 22.6 Z" fill="#8f8f8f"/>
<circle cx="11.4" cy="10" r="1.9" fill="#fff"/><circle cx="21.4" cy="10" r="1.9" fill="#fff"/>
<circle cx="27" cy="20" r="1.6" fill="#fff"/><circle cx="34.8" cy="20" r="1.6" fill="#fff"/>
</svg>
<div class="t" style="left:741px;top:449px;font-size:29.5px;color:rgba(120,120,120,.72);z-index:70;letter-spacing:-.6px">公众号</div>
<div class="t" style="left:839px;top:449px;font-size:29.5px;color:rgba(120,120,120,.72);z-index:70">·</div>
<div class="t" style="left:866.5px;top:449px;font-size:29.5px;color:rgba(120,120,120,.72);z-index:70;letter-spacing:.3px">会计软件助手</div>

</body></html>
